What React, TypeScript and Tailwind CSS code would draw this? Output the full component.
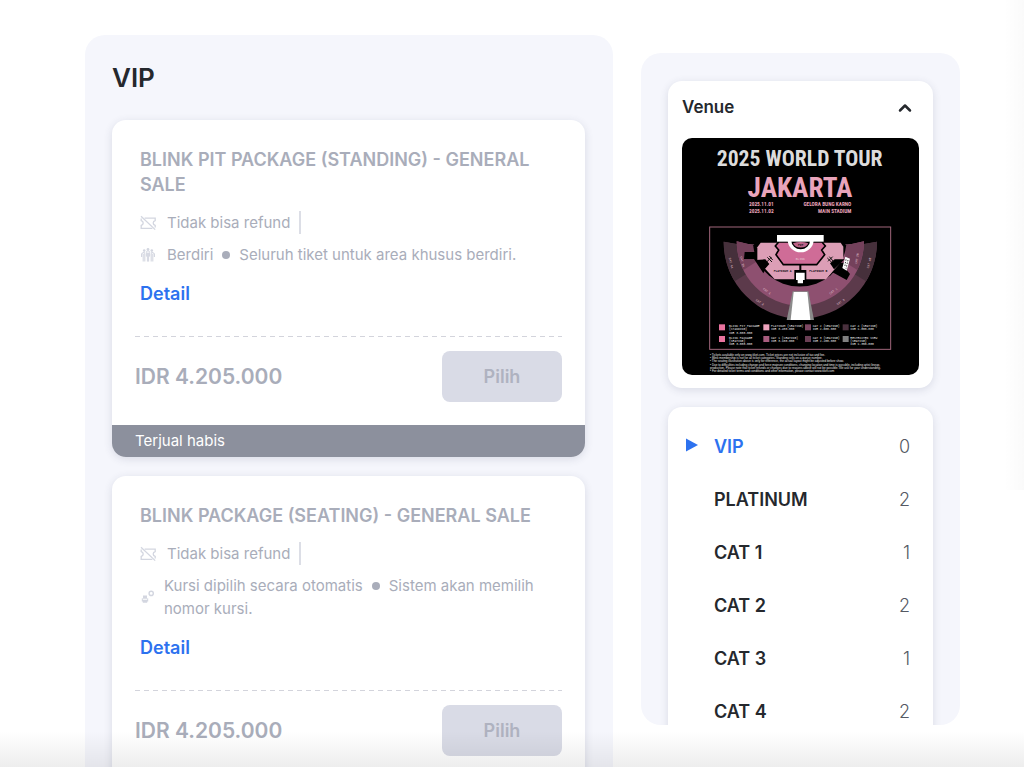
import { useState } from 'react';
import { ChevronDown, ChevronUp } from 'lucide-react';

interface TicketPackage {
  name: string;
  seating: 'standing' | 'auto';
  seatingLabel: string;
  seatingNote: string;
  price: string;
  soldOut: boolean;
}

const packages: TicketPackage[] = [
  {
    name: 'BLINK PIT PACKAGE (STANDING) - GENERAL SALE',
    seating: 'standing',
    seatingLabel: 'Berdiri',
    seatingNote: 'Seluruh tiket untuk area khusus berdiri.',
    price: 'IDR 4.205.000',
    soldOut: true,
  },
  {
    name: 'BLINK PACKAGE (SEATING) - GENERAL SALE',
    seating: 'auto',
    seatingLabel: 'Kursi dipilih secara otomatis',
    seatingNote: 'Sistem akan memilih nomor kursi.',
    price: 'IDR 4.205.000',
    soldOut: true,
  },
];

const categories = [
  { name: 'VIP', count: 0 },
  { name: 'PLATINUM', count: 2 },
  { name: 'CAT 1', count: 1 },
  { name: 'CAT 2', count: 2 },
  { name: 'CAT 3', count: 1 },
  { name: 'CAT 4', count: 2 },
];

const legend = [
  { x: 57, y: 103, color: '#e8739f', lines: ['BLINK PIT PACKAGE', '(STANDING)', 'IDR 3.800.000'] },
  { x: 190, y: 103, color: '#eda3bd', lines: ['PLATINUM (SEATING)', 'IDR 3.400.000'] },
  { x: 315, y: 103, color: '#7d4762', lines: ['CAT 2 (SEATING)', 'IDR 2.600.000'] },
  { x: 428, y: 103, color: '#49303d', lines: ['CAT 4 (SEATING)', 'IDR 1.800.000'] },
  { x: 57, y: 138, color: '#e8739f', lines: ['BLINK PACKAGE', '(SEATING)', 'IDR 3.800.000'] },
  { x: 190, y: 138, color: '#a85c7e', lines: ['CAT 1 (SEATING)', 'IDR 3.100.000'] },
  { x: 315, y: 138, color: '#6a3f54', lines: ['CAT 3 (SEATING)', 'IDR 2.200.000'] },
  { x: 428, y: 138, color: '#808080', lines: ['RESTRICTED VIEW', '(SEATING)', 'IDR 1.350.000'] },
];

const notes = [
  '• Tickets available only on www.tiket.com. Ticket prices are not inclusive of tax and fee.',
  '• Blink membership is not for all ticket categories. Standing sells on a queue number.',
  '• The seating illustration above is only for reference, the actual layout might be adjusted before show.',
  '• Due to difficulties including change and force majeure conditions, changing location and time is possible, including artist lineup,',
  '  production. Please note that ticket refunds or changes due to reasons above will not be possible. We ask for your understanding.',
  '• For detailed ticket terms and conditions and other information, please contact www.tiket.com',
];

const NoRefundIcon = () => (
  <svg viewBox="0 0 16 16" className="h-4 w-4" fill="none" stroke="currentColor" strokeWidth="1.3">
    <path d="M4.6 3.2h10.6v2.4c-1.4.4-2 1.2-2 2.4s.6 2 2 2.4v2M12.4 13.4H1.2v-3c1.4-.4 2-1.2 2-2.4s-.6-2-2-2.4V3.6" />
    <path d="M1 1.2l14.2 13.4" />
  </svg>
);

const StandingIcon = () => (
  <svg viewBox="0 0 16 16" className="h-4 w-4" fill="none" stroke="currentColor">
    <g fill="currentColor" stroke="none">
      <circle cx="8" cy="2.4" r="1.4" />
      <circle cx="4.2" cy="3.6" r="1.3" />
      <circle cx="11.8" cy="3.6" r="1.3" />
    </g>
    <path d="M6.4 9.6V5.4a1.2 1.2 0 0 1 3.2 0v4.2M7.4 14.6V5.6M8.6 14.6V5.6" strokeWidth="1" />
    <path d="M1.6 10V7.2a2 2 0 0 1 3.4-1M3.2 14.4V7M4.8 14.4V6.6" strokeWidth="1.1" />
    <path d="M14.4 10V7.2a2 2 0 0 0-3.4-1M12.8 14.4V7M11.2 14.4V6.6" strokeWidth="1.1" />
  </svg>
);

const AutoSeatIcon = () => (
  <svg viewBox="0 0 16 16" className="h-4 w-4" fill="currentColor">
    <path d="M3 6.4h4v3.4H3zM1.8 9.2h1v1.6h4.4V9.2h1v3.4H7.2v1.2H2.8v-1.2h-1z" />
    <circle cx="11.2" cy="4.4" r="2.1" fill="none" stroke="currentColor" strokeWidth="1.4" />
  </svg>
);

const VenueMap = () => (
  <svg
    viewBox="0 0 711 711"
    role="img"
    aria-label="Venue map"
    className="block w-full rounded-[10px] bg-black font-['Liberation_Sans_Narrow','Roboto_Condensed',sans-serif]"
  >
    <text x="353" y="84" fontSize="65" fontWeight="700" fill="#dcdcdc" textAnchor="middle">
      2025 WORLD TOUR
    </text>
    <text x="354" y="176" fontSize="82" fontWeight="700" fill="#e9a4bb" textAnchor="middle">
      JAKARTA
    </text>
    <g fontSize="16" fontWeight="700" fill="#e9a4bb">
      <text x="201" y="204">2025.11.01</text>
      <text x="201" y="224">2025.11.02</text>
      <text x="508" y="204" textAnchor="end">
        GELORA BUNG KARNO
      </text>
      <text x="508" y="224" textAnchor="end">
        MAIN STADIUM
      </text>
    </g>

    {/* bowl */}
    <g transform="translate(54 246)">
      <rect x="29" y="21" width="543" height="367" fill="none" stroke="#a0667b" strokeWidth="3" />
      <path d="M71 65A230 231 0 0 0 531 65L492 72H110Z" fill="#5c3a4b" />
      <path d="M71 65A230 231 0 0 0 104 184L145 158L110 72Z" fill="#46303b" />
      <path d="M531 65A230 231 0 0 1 498 184L457 158L492 72Z" fill="#46303b" />
      <path d="M110 64A191 193 0 0 0 492 64L438 76H160Z" fill="#8e5070" />
      <path d="M110 64A191 193 0 0 0 130 150L168 126L160 76Z" fill="#74415b" />
      <path d="M492 64A191 193 0 0 1 472 150L434 126L438 76Z" fill="#74415b" />
      <path d="M160 76V80A140 136 0 0 0 438 80V76L420 50H180Z" fill="#000" />
      <path d="M134 96H176V120L204 134L190 160L162 117H132Z" fill="#000" />
      <path d="M400 128H440V150L450 162L440 180L396 156Z" fill="#000" />
      <path d="M278 214L260 300H342L325 214Z" fill="#8b8b8b" />
      <path d="M281 216L272 300H331L322 216Z" fill="#fff" />

      <path d="M182 68H422L430 80V118L378 178H224L172 120V82Z" fill="#dc9eb6" />
      <path d="M168 120L196 118L208 132L194 148ZM434 118L404 118L390 130L402 148Z" fill="#000" />
      <path
        d="M236 66L226 78L236 90L228 104L250 134H350L374 104L365 90L376 78L366 66Z"
        fill="#cf6c97"
        stroke="#000"
        strokeWidth="5"
      />
      <path d="M301 134V158" stroke="#000" strokeWidth="6" />
      <path d="M283 150H319V187H283Z" fill="#000" />
      <path d="M288 158H314V180H309V190H293V180H288Z" fill="#fff" />
      <path d="M263 60A39 37 0 0 0 341 60Z" fill="#fff" />
      <path d="M274 62A28 26 0 0 0 330 62Z" fill="#000" />
      <path d="M279 70Q302 62 325 70A24 18 0 0 1 279 70Z" fill="#bc6388" />
      <rect x="231" y="45" width="140" height="20" fill="#fff" />
      <path d="M436 110L450 116L440 152L427 144Z" fill="#fff" />
      <path d="M438 118L434 142M444 120L438 146" stroke="#444" strokeWidth="3" strokeDasharray="4 4" />
      <path
        d="M202 112l14 14M208 108l10 12M200 126l14-14M384 124l14-14M388 110l12 14M382 114l14 14"
        stroke="#111"
        strokeWidth="3"
      />

      <g fontSize="9" className="font-['Liberation_Mono',monospace]" textAnchor="middle">
        <g fill="#20141a" fontWeight="700">
          <text x="248" y="157">
            PLATINUM A
          </text>
          <text x="355" y="157">
            PLATINUM B
          </text>
          <text x="302" y="79">
            PIT
          </text>
        </g>
        <g fill="#e6cbd6">
          <text x="301" y="120">
            BLINK
          </text>
          <text transform="translate(90 130) rotate(76)">CAT 4A</text>
          <text transform="translate(124 126) rotate(76)">CAT 2A</text>
          <text transform="translate(474 116) rotate(-80)">CAT 2B</text>
          <text transform="translate(510 130) rotate(-76)">CAT 4B</text>
          <text transform="translate(199 216) rotate(36)">CAT 1</text>
          <text transform="translate(402 216) rotate(-36)">CAT 1</text>
          <text transform="translate(178 249) rotate(34)">CAT 3</text>
          <text transform="translate(424 248) rotate(-34)">CAT 3</text>
        </g>
      </g>
    </g>

    {/* legend and small print */}
    <g transform="translate(54 456)" fill="#e8e8e8">
      {legend.map((item) => (
        <g key={item.lines[0]}>
          <rect x={item.x} y={item.y} width="18" height="18" fill={item.color} />
          {item.lines.map((line, i) => (
            <text
              key={line}
              x={item.x + (item.x === 57 ? 30 : 23)}
              y={item.y + 8 + i * 10}
              fontSize="9"
              className="font-['Liberation_Mono',monospace]"
            >
              {line}
            </text>
          ))}
        </g>
      ))}
      {notes.map((note, i) => (
        <text key={note} x="30" y={197 + i * 10} fontSize="9" className="font-['Liberation_Sans',sans-serif]">
          {note}
        </text>
      ))}
    </g>
  </svg>
);

const TicketCard = ({ ticket }: { ticket: TicketPackage }) => (
  <article className="overflow-hidden rounded-[14px] bg-white shadow-[0_2px_8px_rgba(50,55,90,0.14)]">
    <div className="px-[23px] pt-[27px] pb-[23px]">
      <div className="px-[5px] text-[#a9adba]">
        <h3 className="text-[18px] leading-[25px] font-semibold">{ticket.name}</h3>
        <div className="mt-[14px] flex flex-col gap-[9px] text-[15px] leading-[23px]">
          <div className="flex items-center">
            <span className="mr-[11px] text-[#d3d6e0]">
              <NoRefundIcon />
            </span>
            <span className="border-r-2 border-[#dcdee6] pr-[9px]">Tidak bisa refund</span>
          </div>
          <div className="flex items-center">
            <span className={`text-[#d3d6e0] ${ticket.seating === 'standing' ? 'mr-[11px]' : 'mr-2'}`}>
              {ticket.seating === 'standing' ? <StandingIcon /> : <AutoSeatIcon />}
            </span>
            <p>
              {ticket.seatingLabel}
              <span className="mx-[9px] mb-[2px] inline-block h-2 w-2 rounded-full bg-[#a9adba] align-middle" />
              {ticket.seatingNote}
            </p>
          </div>
        </div>
        <a href="#detail" className="mt-4 inline-block text-[18px] leading-6 font-semibold text-[#2d72ef]">
          Detail
        </a>
      </div>
      <div className="mt-[30px] h-px bg-[repeating-linear-gradient(90deg,#d3d4dc_0_5px,transparent_5px_9px)]" />
      <div className="flex items-center justify-between pt-[14px]">
        <span className="text-[21px] font-semibold text-[#a9adba]">{ticket.price}</span>
        <button
          type="button"
          disabled={ticket.soldOut}
          className="h-[51px] w-[120px] rounded-[8px] bg-[#d9dbe6] text-[18px] font-semibold text-[#afb2c0]"
        >
          Pilih
        </button>
      </div>
    </div>
    {ticket.soldOut && (
      <div className="bg-[#8c909d] px-[23px] text-[15px] leading-8 text-white">Terjual habis</div>
    )}
  </article>
);

const App = (): JSX.Element => {
  const [venueOpen, setVenueOpen] = useState(true);
  const [selected, setSelected] = useState('VIP');

  return (
    <div className="relative h-screen overflow-hidden bg-white font-['Inter',sans-serif]">
      <main className="flex items-start gap-7 pt-[35px] pr-16 pl-[85px]">
        <section className="min-w-0 flex-1 rounded-[20px] bg-[#f5f6fc] pr-7 pb-7 pl-[27px]">
          <h2 className="pt-[23px] pb-[22px] text-[26px] leading-10 font-semibold text-[#25282d]">VIP</h2>
          <div className="flex flex-col gap-[19px]">
            {packages.map((ticket) => (
              <TicketCard key={ticket.name} ticket={ticket} />
            ))}
          </div>
        </section>

        <aside className="mt-[18px] h-[calc(100vh-95px)] w-[319px] shrink-0 overflow-hidden rounded-[20px] bg-[#f5f6fc] px-[27px] pt-7">
          <div className="rounded-[14px] bg-white px-[14px] pb-[13px] shadow-[0_2px_8px_rgba(50,55,90,0.14)]">
            <button
              type="button"
              aria-expanded={venueOpen}
              onClick={() => setVenueOpen(!venueOpen)}
              className="flex h-[57px] w-full items-center justify-between pr-1 pb-1 text-[17px] font-semibold text-[#25282d]"
            >
              Venue
              {venueOpen ? <ChevronUp size={20} strokeWidth={3} /> : <ChevronDown size={20} strokeWidth={3} />}
            </button>
            {venueOpen && <VenueMap />}
          </div>

          <nav className="mt-[19px] rounded-[14px] bg-white py-[13px] shadow-[0_2px_8px_rgba(50,55,90,0.14)]">
            {categories.map((category) => (
              <button
                key={category.name}
                type="button"
                onClick={() => setSelected(category.name)}
                className={`flex h-[53px] w-full items-center pr-[23px] pl-[18px] text-[18px] ${
                  selected === category.name ? 'text-[#2d72ef]' : 'text-[#25282d]'
                }`}
              >
                <span className="w-7">
                  {selected === category.name && (
                    <svg viewBox="0 0 12 14" className="mb-1 h-[14px] w-3" fill="currentColor">
                      <path d="M0 0.5L12 7L0 13.5Z" />
                    </svg>
                  )}
                </span>
                <span className="font-semibold">{category.name}</span>
                <span className="ml-auto font-light text-[#555963]">{category.count}</span>
              </button>
            ))}
          </nav>
        </aside>
      </main>

      <div className="pointer-events-none absolute top-0 right-0 h-[490px] w-5 bg-linear-to-r from-transparent to-black/2" />
      <div className="pointer-events-none absolute inset-x-0 bottom-0 h-9 bg-linear-to-b from-transparent to-black/7" />
    </div>
  );
};

export default App;
